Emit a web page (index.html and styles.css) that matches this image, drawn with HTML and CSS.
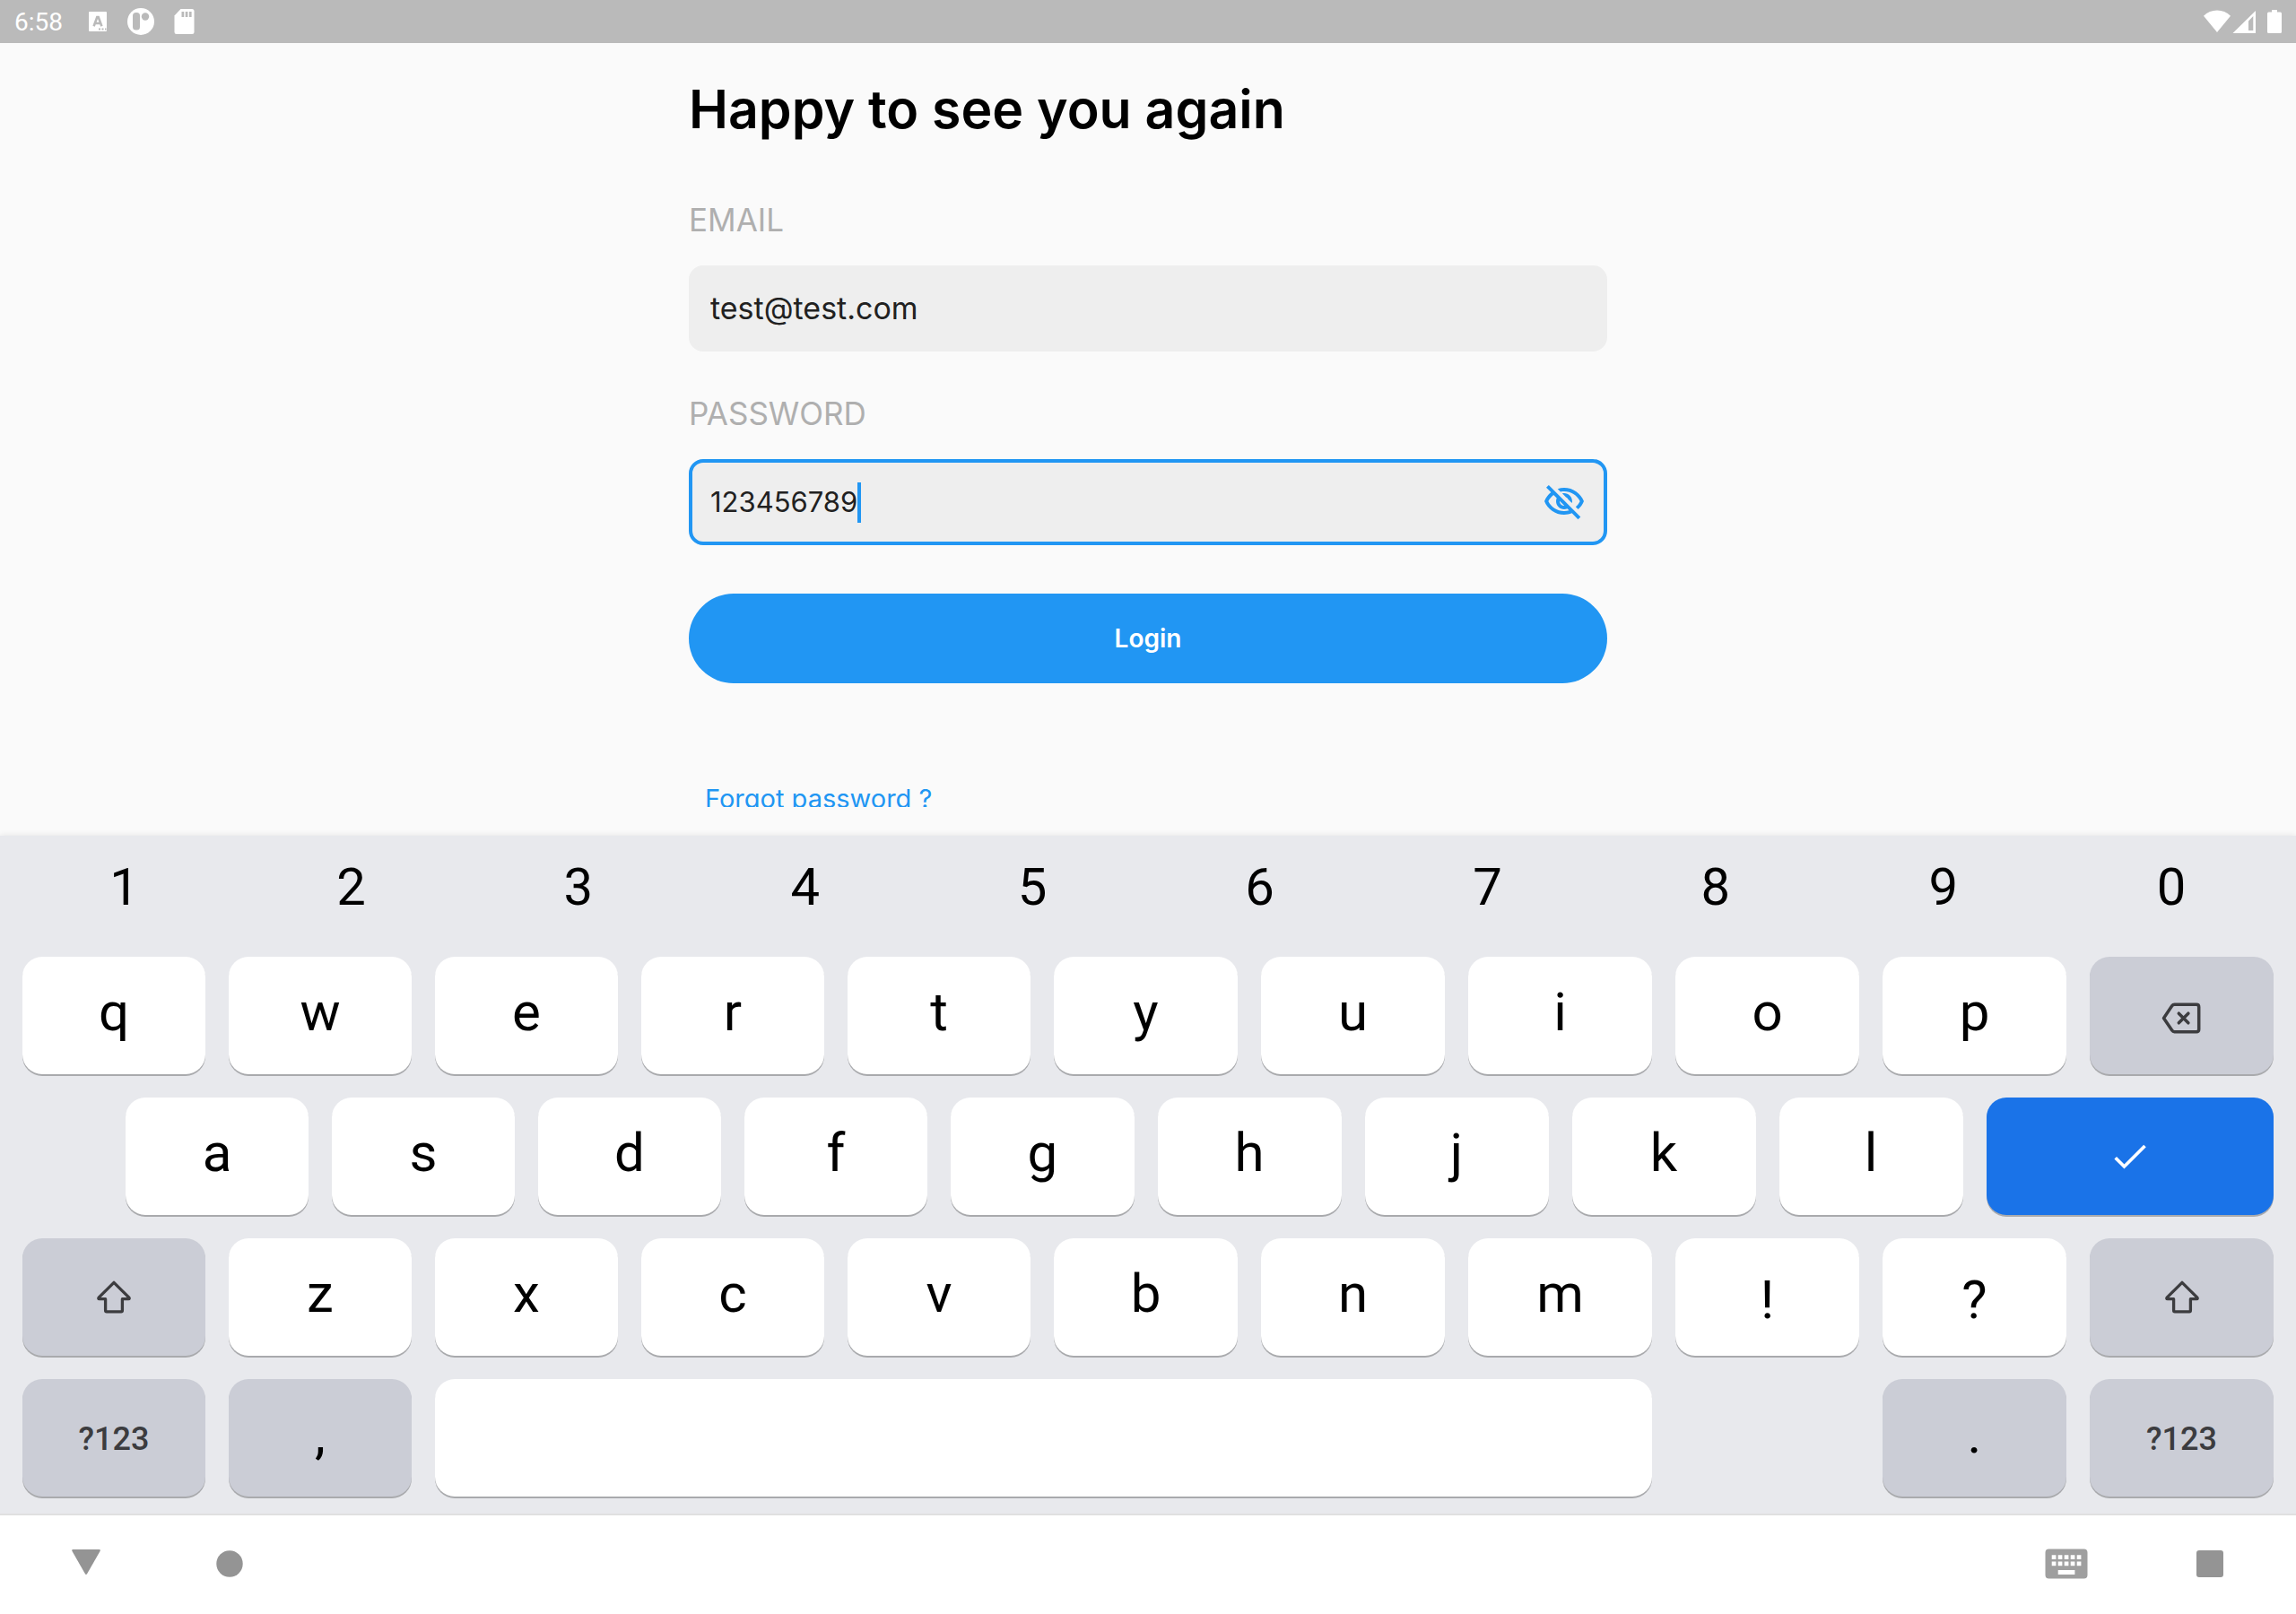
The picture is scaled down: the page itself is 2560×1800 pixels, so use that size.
FILE: index.html
```html
<!DOCTYPE html>
<html lang="en">
<head>
<meta charset="utf-8">
<meta name="viewport" content="width=device-width, initial-scale=1">
<title>Login</title>
<link rel="stylesheet" href="styles.css">
</head>
<body>
<header class="status">
  <div class="status-left">
    <time class="clock">6:58</time>
    <svg class="status-icon" viewBox="0 0 32 32" aria-hidden="true"><path fill="#fff" d="M7 5h18a1 1 0 0 1 1 1v20a1 1 0 0 1-1 1H7a1 1 0 0 1-1-1V6a1 1 0 0 1 1-1z"/><path fill="none" stroke="#bababa" stroke-width="2.6" d="M11.600 21.300L15.300 11h1.400l3.700 10.300M13 18h6"/><path fill="#bababa" d="M17 23.500h2v2h-2zM20.500 23.500h2v2h-2zM24 23.500h1.500v2H24z"/></svg>
    <svg class="status-icon" viewBox="0 0 32 32" aria-hidden="true"><circle cx="16" cy="16" r="15" fill="#fff"/><rect x="7" y="6" width="8" height="19.500" rx="3.500" fill="#bababa"/><circle cx="21" cy="10.500" r="4.200" fill="#bababa"/></svg>
    <svg class="status-icon" viewBox="0 0 32 32" aria-hidden="true"><path fill="#fff" d="M12.500 2H25a2.500 2.500 0 0 1 2.500 2.500v23A2.500 2.500 0 0 1 25 30H8a2.500 2.500 0 0 1-2.500-2.500V9.500z"/><path fill="#bababa" d="M13.500 5h2.700v6h-2.700zM17.700 5h2.700v6h-2.700zM21.900 5h2.700v6h-2.700z"/></svg>
  </div>
  <div class="status-right">
    <svg class="status-icon" viewBox="0 0 32 32" aria-hidden="true"><path fill="#fff" d="M1 9.800C9 1.300 23 1.300 31 9.800L16 28z"/></svg>
    <svg class="status-icon" viewBox="0 0 32 32" aria-hidden="true"><path fill="#fff" fill-rule="evenodd" d="M27 4v25H1.500zM24.300 10l-5.300 5.500V26h5.300z"/></svg>
    <svg class="status-icon" viewBox="0 0 32 32" aria-hidden="true"><path fill="#fff" d="M13 3h6v2.500h3.500A1.500 1.500 0 0 1 24 7v20.500a1.500 1.500 0 0 1-1.500 1.500h-13A1.500 1.500 0 0 1 8 27.500V7a1.500 1.500 0 0 1 1.500-1.500H13z"/></svg>
  </div>
</header>

<main class="page">
  <form class="login">
    <h1 class="title">Happy to see you again</h1>
    <label class="label" for="email">EMAIL</label>
    <div class="field"><input class="input" id="email" type="email" value="test@test.com"></div>
    <label class="label" for="password">PASSWORD</label>
    <div class="field field-active">
      <input class="input input-fit" id="password" type="text" value="123456789">
      <span class="caret"></span>
      <button class="toggle" type="button" aria-label="Hide password">
        <svg viewBox="0 0 24 24"><path fill="currentColor" d="M12 6c3.790 0 7.170 2.130 8.820 5.500-.590 1.220-1.420 2.270-2.410 3.120l1.410 1.410c1.390-1.230 2.490-2.770 3.180-4.530C21.270 7.110 17 4 12 4c-1.270 0-2.490.2-3.640.57l1.650 1.650C10.660 6.090 11.320 6 12 6zm-1.070 1.140L13 9.210c.57.25 1.030.71 1.280 1.280l2.070 2.070c.08-.34.14-.7.14-1.070C16.500 9.010 14.480 7 12 7c-.37 0-.72.05-1.070.14zM2.010 3.870l2.680 2.680C3.060 7.830 1.770 9.530 1 11.500 2.730 15.890 7 19 12 19c1.520 0 2.980-.29 4.320-.82l3.420 3.420 1.410-1.410L3.420 2.450 2.010 3.870zm7.500 7.500l2.610 2.610c-.04.01-.08.02-.12.02-1.380 0-2.500-1.120-2.500-2.500 0-.05.01-.08.01-.13zm-3.400-3.400l1.750 1.750c-.23.55-.36 1.150-.36 1.780 0 2.480 2.020 4.500 4.500 4.500.63 0 1.230-.13 1.770-.36l.98.98c-.88.24-1.800.38-2.750.38-3.790 0-7.170-2.130-8.820-5.500.7-1.430 1.720-2.610 2.930-3.530z"/></svg>
      </button>
    </div>
    <button class="submit" type="submit">Login</button>
    <a class="forgot" href="#">Forgot password ?</a>
  </form>
</main>

<section class="keyboard" aria-label="Keyboard">
  <div class="digits">
    <button class="digit">1</button><button class="digit">2</button><button class="digit">3</button><button class="digit">4</button><button class="digit">5</button><button class="digit">6</button><button class="digit">7</button><button class="digit">8</button><button class="digit">9</button><button class="digit">0</button>
  </div>
  <div class="keys">
    <button class="key">q</button><button class="key">w</button><button class="key">e</button><button class="key">r</button><button class="key">t</button><button class="key">y</button><button class="key">u</button><button class="key">i</button><button class="key">o</button><button class="key">p</button>
    <button class="key key-mod key-icon" aria-label="Backspace"><svg viewBox="0 0 48 48"><g fill="none" stroke="currentColor" stroke-width="3.500" stroke-linejoin="round"><path d="M3.500 26.500L12.700 12.800Q13.800 11.200 15.500 11.200H40Q42.700 11.200 42.700 13.900V39Q42.700 41.700 40 41.700H15.500Q13.800 41.700 12.700 40.100z"/><path stroke-linecap="round" d="M20.300 21.200l10.600 10.600M30.900 21.200L20.300 31.800"/></g></svg></button>

    <button class="key key-indent">a</button><button class="key">s</button><button class="key">d</button><button class="key">f</button><button class="key">g</button><button class="key">h</button><button class="key">j</button><button class="key">k</button><button class="key">l</button>
    <button class="key key-enter key-icon" aria-label="Done"><svg viewBox="0 0 48 48"><path fill="none" stroke="currentColor" stroke-width="3.700" d="M7.700 25.200L17.500 35 40.500 12"/></svg></button>

    <button class="key key-mod key-icon" aria-label="Shift"><svg viewBox="0 0 48 48"><path fill="none" stroke="currentColor" stroke-width="3.300" stroke-linejoin="round" d="M24 7.300L40.900 24.200Q41.800 25.700 40.200 25.700H33.400V38.500Q33.400 39.800 32.100 39.800H15.900Q14.600 39.800 14.600 38.500V25.700H7.800Q6.200 25.700 7.100 24.200z"/></svg></button>
    <button class="key">z</button><button class="key">x</button><button class="key">c</button><button class="key">v</button><button class="key">b</button><button class="key">n</button><button class="key">m</button><button class="key key-mark">!</button><button class="key key-mark">?</button>
    <button class="key key-mod key-icon" aria-label="Shift"><svg viewBox="0 0 48 48"><path fill="none" stroke="currentColor" stroke-width="3.300" stroke-linejoin="round" d="M24 7.300L40.900 24.200Q41.800 25.700 40.200 25.700H33.400V38.500Q33.400 39.800 32.100 39.800H15.900Q14.600 39.800 14.600 38.500V25.700H7.800Q6.200 25.700 7.100 24.200z"/></svg></button>

    <button class="key key-mod key-symbols">?123</button><button class="key key-mod">,</button><button class="key key-space" aria-label="Space"></button><button class="key key-mod key-period">.</button><button class="key key-mod key-symbols">?123</button>
  </div>
</section>

<nav class="nav" aria-label="System">
  <div class="nav-group">
    <button class="nav-button" aria-label="Back"><svg viewBox="0 0 48 48"><path fill="currentColor" d="M9.500 7h29q2 0 1 2L25.200 34q-1.200 2-2.400 0L8.500 9q-1-2 1-2z"/></svg></button>
    <button class="nav-button" aria-label="Home"><svg viewBox="0 0 48 48"><circle cx="24" cy="23" r="14.700" fill="currentColor"/></svg></button>
  </div>
  <div class="nav-group">
    <button class="nav-button nav-light" aria-label="Switch keyboard"><svg viewBox="0 0 48 48"><path fill="currentColor" fill-rule="evenodd" d="M4.500 6.500h39a4 4 0 0 1 4 4v25a4 4 0 0 1-4 4h-39a4 4 0 0 1-4-4v-25a4 4 0 0 1 4-4zM7.700 13.300v4.700h4.700v-4.700zM14.700 13.300v4.700h4.700v-4.700zM21.700 13.300v4.700h4.700v-4.700zM28.700 13.300v4.700h4.700v-4.700zM35.700 13.300v4.700h4.700v-4.700zM7.700 20.500v4.700h4.700v-4.700zM14.700 20.500v4.700h4.700v-4.700zM21.700 20.500v4.700h4.700v-4.700zM28.700 20.500v4.700h4.700v-4.700zM35.700 20.500v4.700h4.700v-4.700zM14.700 30v5h18.700v-5z"/></svg></button>
    <button class="nav-button" aria-label="Recent apps"><svg viewBox="0 0 48 48"><rect x="9" y="8" width="30" height="30" rx="3" fill="currentColor"/></svg></button>
  </div>
</nav>
</body>
</html>
```
FILE: styles.css
```css
* { box-sizing: border-box; }

body {
  margin: 0;
  height: 100vh;
  display: flex;
  flex-direction: column;
  background: #fafafa;
  font-family: Inter, "Open Sans", sans-serif;
  overflow: hidden;
}

button {
  margin: 0;
  padding: 0;
  border: 0;
  background: none;
  font: inherit;
  color: inherit;
}

svg { display: block; }

/* Status bar */
.status {
  display: flex;
  flex: none;
  justify-content: space-between;
  align-items: center;
  height: 48px;
  padding: 0 8px 0 16px;
  background: #bababa;
}
.status-left, .status-right { display: flex; align-items: center; }
.status-left { gap: 16px; }
.status-icon { width: 32px; height: 32px; }
.clock {
  width: 61px;
  padding-top: 2px;
  font: 28px/32px Roboto, sans-serif;
  color: #fff;
}

/* Login form */
.page {
  flex: 1;
  min-height: 0;
  display: flex;
  flex-direction: column;
  padding-bottom: 32px;
}
.login {
  flex: 1;
  min-height: 0;
  width: 40%;
  margin: 0 auto;
  padding-top: 42px;
  display: flex;
  flex-direction: column;
  align-items: stretch;
  overflow: hidden;
}
.login > * { flex: none; }
.title {
  margin: 0 0 71px;
  font-size: 59px;
  line-height: 64px;
  font-weight: 600;
  color: #000;
}
.label {
  margin-bottom: 31px;
  font-size: 35px;
  line-height: 40px;
  color: #afafaf;
}
.field {
  display: flex;
  align-items: center;
  height: 96px;
  margin-bottom: 49px;
  padding: 0 20px;
  border: 4px solid #eee;
  border-radius: 16px;
  background: #eee;
}
.field-active {
  margin-bottom: 54px;
  border-color: #2196f3;
}
.input {
  flex: 1;
  min-width: 0;
  padding: 0;
  border: 0;
  outline: 0;
  background: none;
  font: 34px/44px Inter, "Open Sans", sans-serif;
  color: #212121;
}
.input-fit {
  flex: none;
  field-sizing: content;
  font-size: 31px;
}
.caret { width: 4px; height: 45px; background: #2196f3; }
.toggle { margin-left: auto; color: #2196f3; }
.toggle svg { width: 48px; height: 48px; }
.submit {
  height: 100px;
  margin-bottom: 109px;
  border-radius: 50px;
  background: #2196f3;
  color: #fff;
  font-size: 28px;
  font-weight: 600;
}
.forgot {
  align-self: flex-start;
  padding-left: 18px;
  font-size: 29px;
  line-height: 40px;
  color: #2196f3;
  text-decoration: none;
}

/* On-screen keyboard */
.keyboard {
  flex: none;
  padding: 0 12px 19px;
  border-bottom: 2px solid #e0e0e0;
  background: #e8e9ed;
  box-shadow: 0 -1px 6px rgba(0, 0, 0, .08);
  font-family: Roboto, sans-serif;
  color: #000;
}
.digits {
  display: grid;
  grid-template-columns: repeat(5, 253fr) repeat(5, 254fr);
  margin-bottom: 21px;
}
.digit { height: 114px; font-size: 58px; }
.keys {
  display: grid;
  grid-template-columns: repeat(10, 230fr) repeat(12, 231fr);
  row-gap: 26px;
}
.key {
  grid-column: span 2;
  height: 131px;
  margin: 0 13px;
  padding-bottom: 8px;
  border-radius: 22px;
  background: #fff;
  box-shadow: 0 2px 0 #a9aaad;
  font-size: 60px;
}
.key-indent { grid-column: 2 / span 2; }
.key-enter { grid-column: span 3; background: #1a73e8; color: #fff; }
.key-space { grid-column: span 12; }
.key-period { grid-column: 19 / span 2; }
.key-mark { padding: 6px 0 0; }
.key-mod { background: #cbcdd6; }
.key-icon { display: grid; place-items: center; padding: 0; }
.key-icon svg { width: 48px; height: 48px; }
.key-mod.key-icon, .key-symbols { color: #3c3c3f; }
.key-symbols { padding: 2px 0 0; font-size: 36px; font-weight: 500; }

/* System navigation */
.nav {
  display: flex;
  flex: none;
  justify-content: space-between;
  height: 110px;
  padding: 0 16px;
  background: #fff;
  color: #949494;
}
.nav-group { display: flex; }
.nav-button { display: grid; place-items: center; width: 160px; }
.nav-button svg { width: 48px; height: 48px; }
.nav-light { color: #9f9f9f; }
```
